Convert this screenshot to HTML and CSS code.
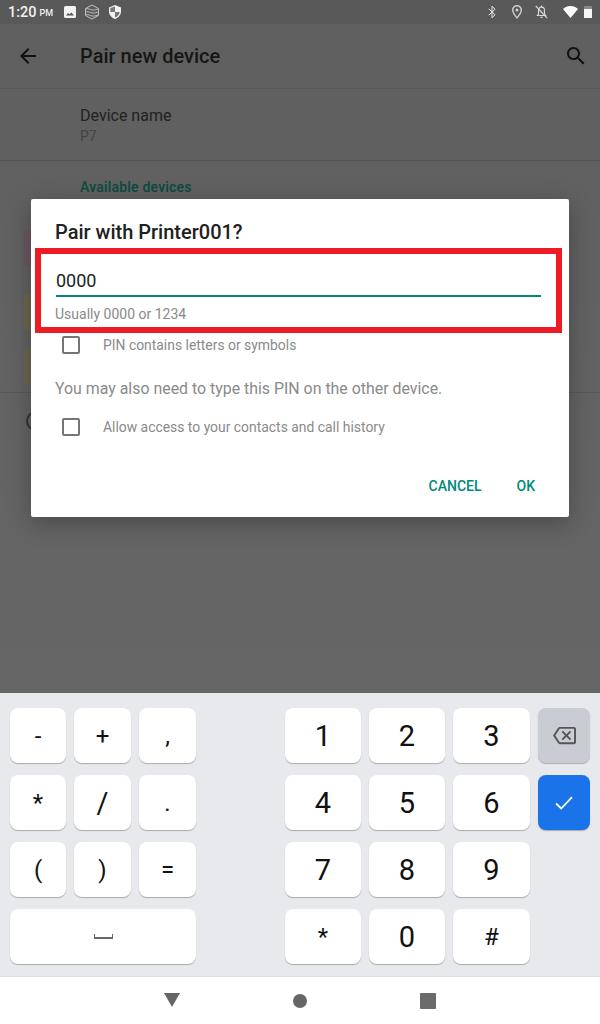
FILE: index.html
```html
<!DOCTYPE html>
<html>
<head>
  <title>Pair new device</title>
  <link rel="stylesheet" href="styles.css">
</head>
<body>
  <div class="screen">
    <div class="status-bar">
      <div class="status-left">
        <span class="time">1:20</span><span class="ampm">PM</span>
        <svg class="st-image" width="12" height="12" viewBox="0 0 12 12"><rect width="12" height="12" rx="1.5" fill="#f2f2f2"/><path d="M2 9.5 L4 7 L5.5 8.2 L7.5 6.5 L10 9.5 Z" fill="#555"/></svg>
        <svg class="st-stack" width="16" height="16" viewBox="0 0 16 16" fill="none" stroke="#c8c8c8" stroke-width="0.9"><path d="M8 1 L14.5 4.5 V11.5 L8 15 L1.5 11.5 V4.5 Z"/><path d="M2 5 C5 3.5 7 8 14 5"/><path d="M2 8 C5 6.5 7 11 14 8"/><path d="M2 11 C5 9.5 7 14 14 11"/></svg>
        <svg class="st-shield" width="12" height="14" viewBox="0 0 12 14"><path d="M6 0 L12 2.4 V6.5 C12 10 9.5 12.8 6 14 C2.5 12.8 0 10 0 6.5 V2.4 Z" fill="#f2f2f2"/><path d="M6 1.5 V7 H1.3 V2.9 Z M6 7 H10.7 C10.3 9.8 8.5 11.7 6 12.6 Z" fill="#777"/></svg>
      </div>
      <div class="status-right">
        <svg width="8" height="14" viewBox="0 0 8 14" fill="none" stroke="#e8e8e8" stroke-width="1"><path d="M0.8 3.8 L7 9.8 L4 12.8 V1.2 L7 4.2 L0.8 10.2"/></svg>
        <svg class="st-pin" width="10" height="14" viewBox="0 0 10 14"><path fill-rule="evenodd" d="M5 0 C2.2 0 0 2.2 0 5 C0 8.5 5 14 5 14 C5 14 10 8.5 10 5 C10 2.2 7.8 0 5 0 Z M5 1.4 C7 1.4 8.6 3 8.6 5 C8.6 7 6.5 10 5 11.8 C3.5 10 1.4 7 1.4 5 C1.4 3 3 1.4 5 1.4 Z" fill="#cfcfcf"/><circle cx="5" cy="5" r="1.5" fill="#cfcfcf"/></svg>
        <svg class="st-bell" width="13" height="14" viewBox="0 0 13 14" fill="none" stroke="#d8d8d8" stroke-width="1.2"><path d="M2.5 10.5 H10.5 L9.5 9 V5.5 C9.5 3.5 8.2 2.2 6.5 2.2 C4.8 2.2 3.5 3.5 3.5 5.5 V9 Z"/><path d="M5.5 12.3 H7.5"/><path d="M6.5 0.5 V2"/><path d="M0.8 1 L12.2 13.2"/></svg>
        <svg class="st-wifi" width="15" height="12" viewBox="0 0 15 12"><path d="M0 3 C4 -1 11 -1 15 3 L7.5 12 Z" fill="#fff"/></svg>
        <div class="st-battery"></div>
      </div>
    </div>

    <div class="settings">
      <div class="app-bar">
        <svg class="back-icon" width="24" height="24" viewBox="0 0 24 24"><path d="M20 11H7.83l5.59-5.59L12 4l-8 8 8 8 1.41-1.41L7.83 13H20v-2z" fill="#111"/></svg>
        <span class="app-title">Pair new device</span>
        <svg class="search-icon" width="24" height="24" viewBox="0 0 24 24"><path d="M15.5 14h-.79l-.28-.27C15.41 12.59 16 11.11 16 9.5 16 5.91 13.09 3 9.5 3S3 5.91 3 9.5 5.91 16 9.5 16c1.61 0 3.09-.59 4.23-1.57l.27.28v.79l5 4.99L20.49 19l-4.99-5zm-6 0C7.01 14 5 11.99 5 9.5S7.01 5 9.5 5 14 7.01 14 9.5 11.99 14 9.5 14z" fill="#111"/></svg>
      </div>
      <div class="name-row">
        <div class="name-label">Device name</div>
        <div class="name-value">P7</div>
      </div>
      <div class="available">
        <div class="available-title">Available devices</div>
        <div class="tile tile-pink"></div>
        <div class="tile tile-yellow"></div>
        <div class="tile tile-yellow tile-last"></div>
      </div>
      <div class="help-row"><span class="help-circle"></span></div>
    </div>

    <div class="keyboard">
      <div class="key sym">-</div>
      <div class="key sym">+</div>
      <div class="key sym">,</div>
      <div class="key num first">1</div>
      <div class="key num">2</div>
      <div class="key num">3</div>
      <div class="key action">
        <svg width="23" height="23" viewBox="0 0 24 24"><path d="M22 3H7c-.69 0-1.23.35-1.59.88L0 12l5.41 8.11c.36.53.9.89 1.59.89h15c1.1 0 2-.9 2-2V5c0-1.1-.9-2-2-2zm0 16H7.07L2.4 12l4.66-7H22v14zm-11.59-2L14 13.41 17.59 17 19 15.59 15.41 12 19 8.41 17.59 7 14 10.59 10.41 7 9 8.41 12.59 12 9 15.59z" fill="#555"/></svg>
      </div>

      <div class="key sym">*</div>
      <div class="key sym tall">/</div>
      <div class="key sym">.</div>
      <div class="key num first">4</div>
      <div class="key num">5</div>
      <div class="key num">6</div>
      <div class="key done">
        <svg width="18" height="14" viewBox="0 0 18 14" fill="none" stroke="#fff" stroke-width="1.8"><path d="M1 7.5 L6.2 12.5 L17 1.2"/></svg>
      </div>

      <div class="key sym">(</div>
      <div class="key sym">)</div>
      <div class="key sym">=</div>
      <div class="key num first">7</div>
      <div class="key num">8</div>
      <div class="key num">9</div>

      <div class="key space"><span class="space-mark"></span></div>
      <div class="key sym first">*</div>
      <div class="key num">0</div>
      <div class="key sym">#</div>
    </div>

    <div class="nav-bar">
      <svg class="nav-back" width="16" height="14" viewBox="0 0 16 14"><path d="M0 0 H16 L8 14 Z" fill="#666"/></svg>
      <div class="nav-circle"></div>
      <div class="nav-square"></div>
    </div>

    <div class="dialog">
      <div class="dialog-title">Pair with Printer001?</div>
      <div class="pin-value">0000</div>
      <div class="pin-line"></div>
      <div class="pin-hint">Usually 0000 or 1234</div>
      <div class="check-row">
        <span class="checkbox"></span>
        <span class="check-text">PIN contains letters or symbols</span>
      </div>
      <div class="dialog-note">You may also need to type this PIN on the other device.</div>
      <div class="check-row check-row-2">
        <span class="checkbox"></span>
        <span class="check-text">Allow access to your contacts and call history</span>
      </div>
      <div class="dialog-actions">
        <span>CANCEL</span>
        <span>OK</span>
      </div>
    </div>

    <div class="highlight"></div>
  </div>
</body>
</html>
```

FILE: styles.css
```css
body {
  margin: 0;
  font-family: Roboto, "Liberation Sans", sans-serif;
}

.screen {
  position: relative;
  width: 600px;
  height: 1024px;
  display: flex;
  flex-direction: column;
  overflow: hidden;
}

/* status bar */
.status-bar {
  height: 24px;
  background-color: #595959;
  display: flex;
  justify-content: space-between;
  align-items: center;
  padding: 0 8px;
  box-sizing: border-box;
}

.status-left,
.status-right {
  display: flex;
  align-items: center;
}

.time {
  font-size: 14.5px;
  font-weight: 500;
  color: #f0f0f0;
}

.ampm {
  font-size: 9px;
  font-weight: 500;
  color: #f0f0f0;
  margin-left: 3px;
  margin-top: 2px;
}

.st-image {
  margin-left: 11px;
}

.st-stack {
  margin-left: 8px;
}

.st-shield {
  margin-left: 9px;
}

.st-pin {
  margin-left: 16px;
}

.st-bell {
  margin-left: 13px;
}

.st-wifi {
  margin-left: 15px;
}

.st-battery {
  width: 8px;
  height: 12px;
  margin-left: 6px;
  background: linear-gradient(#8a8a8a 0 3px, #f6f6f6 3px);
  border-radius: 1px 1px 0 0;
}

/* settings page behind the dialog */
.settings {
  flex: 1;
  background-color: #606060;
  background-image: linear-gradient(#5f5f5f, #666);
}

.app-bar {
  height: 64px;
  display: flex;
  align-items: center;
  padding: 0 12px 0 16px;
  border-bottom: 1px solid #585858;
}

.app-title {
  font-size: 20px;
  font-weight: 500;
  color: #161616;
  margin-left: 40px;
  flex: 1;
}

.name-row {
  height: 72px;
  padding: 18px 0 0 80px;
  box-sizing: border-box;
  border-bottom: 1px solid #555;
}

.name-label {
  font-size: 16px;
  line-height: 18px;
  color: #222;
}

.name-value {
  font-size: 14px;
  line-height: 16px;
  margin-top: 3px;
  color: #444;
}

.available {
  padding: 17px 0 0 24px;
  height: 232px;
  box-sizing: border-box;
  border-bottom: 1px solid #595959;
}

.available-title {
  font-size: 14px;
  font-weight: 500;
  letter-spacing: 0.2px;
  line-height: 18px;
  margin-left: 56px;
  color: #0b4a40;
}

.tile {
  width: 36px;
  height: 36px;
  margin-top: 28px;
  border-radius: 4px;
}

.tile-pink {
  margin-top: 34px;
  background-color: #6b5763;
}

.tile-yellow {
  background-color: #6c6650;
}

.tile-last {
  margin-top: 18px;
}

.help-row {
  padding: 18px 0 0 26px;
}

.help-circle {
  display: block;
  width: 16px;
  height: 16px;
  border: 2px solid #333;
  border-radius: 50%;
}

/* keyboard */
.keyboard {
  height: 283px;
  box-sizing: border-box;
  padding: 15px 0 0 10px;
  background-color: #e8e9ed;
  display: grid;
  grid-template-columns: 56px 57px 57px 73px 76px 76px 77px 52px;
  grid-auto-rows: 55px;
  gap: 12px 8px;
}

.key {
  background-color: #fff;
  border-radius: 8px;
  box-shadow: 0 1px 1px #aaa;
  display: flex;
  align-items: center;
  justify-content: center;
  color: #111;
}

.key.sym {
  font-size: 24px;
}

.key.sym.tall {
  font-size: 29px;
}

.key.num {
  font-size: 29px;
}

.key.first {
  grid-column-start: 5;
}

.key.action {
  background-color: #c9ccd3;
}

.key.done {
  background-color: #1a73e8;
}

.key.space {
  grid-column: 1 / span 3;
}

.space-mark {
  width: 17px;
  height: 3px;
  border: 1px solid #666;
  border-top: none;
  border-bottom-width: 2px;
}

/* nav bar */
.nav-bar {
  height: 48px;
  background-color: #fff;
  border-top: 1px solid #e0e1e5;
  box-sizing: border-box;
  display: flex;
  align-items: center;
  justify-content: center;
  gap: 113px;
}

.nav-back {
  margin-bottom: 2px;
}

.nav-circle {
  width: 14px;
  height: 14px;
  border-radius: 50%;
  background-color: #666;
}

.nav-square {
  width: 16px;
  height: 16px;
  border-radius: 1px;
  background-color: #6b6b6b;
}

/* dialog */
.dialog {
  position: absolute;
  left: 31px;
  top: 199px;
  width: 538px;
  height: 318px;
  box-sizing: border-box;
  padding: 21px 28px 0 24px;
  background-color: #fff;
  border-radius: 2px;
  box-shadow: 0 6px 24px rgba(0, 0, 0, 0.28);
}

.dialog-title {
  font-size: 20px;
  font-weight: 500;
  line-height: 24px;
  color: #212121;
}

.pin-value {
  font-size: 18px;
  line-height: 24px;
  margin: 25px 0 0 1px;
  color: #212121;
}

.pin-line {
  height: 2px;
  margin: 2px 0 0 1px;
  background-color: #00897b;
}

.pin-hint {
  font-size: 14px;
  line-height: 16px;
  margin-top: 9px;
  color: #8a8a8a;
}

.check-row {
  display: flex;
  align-items: center;
  margin: 14px 0 0 7px;
}

.checkbox {
  width: 14px;
  height: 14px;
  border: 2px solid #757575;
  border-radius: 2px;
}

.check-text {
  font-size: 13.9px;
  line-height: 18px;
  margin-left: 23px;
  color: #8a8a8a;
}

.dialog-note {
  font-size: 15.9px;
  line-height: 20px;
  margin-top: 25px;
  color: #8a8a8a;
}

.check-row-2 {
  margin-top: 19px;
}

.dialog-actions {
  display: flex;
  justify-content: flex-end;
  gap: 35px;
  margin-top: 42px;
  padding-right: 6px;
  font-size: 14px;
  font-weight: 500;
  color: #00897b;
}

/* red annotation box drawn over the screenshot */
.highlight {
  position: absolute;
  left: 35px;
  top: 248px;
  width: 527px;
  height: 85px;
  box-sizing: border-box;
  border: 6px solid #ed1c24;
}
```
